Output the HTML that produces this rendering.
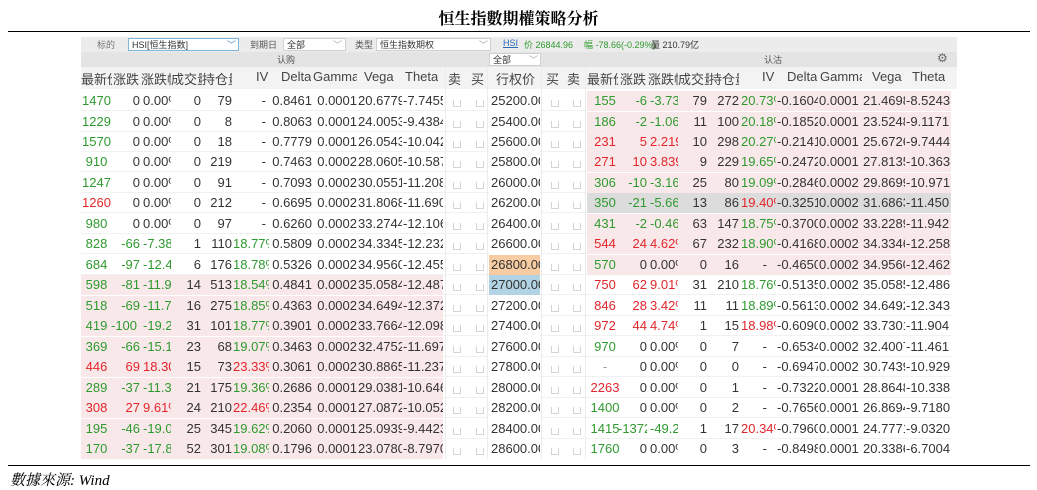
<!DOCTYPE html>
<html><head><meta charset="utf-8"><style>
*{margin:0;padding:0;box-sizing:border-box}
body{width:1037px;height:490px;background:#fff;position:relative;overflow:hidden;font-family:"Liberation Sans","Noto Sans CJK SC",sans-serif;color:#333}
.title{position:absolute;left:0;width:1037px;top:6px;text-align:center;font:bold 16px "Liberation Serif","Noto Serif CJK SC",serif;color:#000}
.ln{position:absolute;left:8px;width:1022px;height:1px;background:#000}
.src{position:absolute;left:10px;top:469px;font:italic 15px "Liberation Serif","Noto Serif CJK SC",serif;color:#000}
.tb{position:absolute;left:81px;top:37px;width:876px;height:15px;background:#ececec;font-size:9px;color:#555}
.tb span{position:absolute;top:1px;white-space:nowrap}
.sel{position:absolute;top:1px;height:13px;background:#fff;border:1px solid #d0d0d0}
.sh{position:absolute;left:81px;top:52px;width:876px;height:15px;background:#e4e4e4;font-size:9px;color:#555}
.hd{position:absolute;left:81px;top:67px;width:876px;height:22px;background:#f3f3f3}
.h{position:absolute;top:69px;font-size:13px;white-space:nowrap;overflow:hidden;color:#444}
.r{position:absolute;left:0;width:1037px;height:20px;font-size:13px;line-height:20px}
.r span{position:absolute;top:0;height:20px;white-space:nowrap;overflow:hidden;text-align:right}
.pl{position:absolute;left:81px;width:362px;top:0;height:20px;background:#f9e8e9}
.pr{position:absolute;left:587px;width:364px;top:0;height:20px;background:#f9e8e9}
.gr{background:#dcdcdc}
.sep{position:absolute;left:81px;width:870px;bottom:0;height:1px;background:#f1f1f1}
.cb{position:absolute;top:9px;width:8px;height:7px;border:1px solid #d4d4d4;border-top:none}
.r span.a,.r span.A{text-align:center}
.a{left:81px;width:31px}.b{left:111px;width:29px}.c{left:140px;width:31px;padding-left:3px}.d{left:171px;width:30px}.e{left:201px;width:31px}.f{left:232px;width:37px;padding-left:1px}.g{left:270px;width:42px}.hh{left:312px;width:45px}.i{left:357px;width:45px;padding-left:1px}.j{left:402px;width:41px;padding-left:1px}
.k{left:489px;width:51px;padding-left:2px;background:#fff}
.A{left:587px;width:36px}.B{left:618px;width:29px}.C{left:647px;width:31px;padding-left:3px}.D{left:678px;width:29px}.E{left:707px;width:32px}.F{left:739px;width:37px;padding-left:2px}.G{left:776px;width:42px;padding-left:1px}.H{left:818px;width:43px;padding-left:1px}.I{left:861px;width:44px;padding-left:2px}.J{left:905px;width:46px;padding-left:1px}
.r span.c,.r span.f,.r span.i,.r span.j,.r span.k,.r span.C,.r span.F,.r span.G,.r span.H,.r span.I,.r span.J,.r span.L{text-align:left}
.r span.f.dsh{text-align:right;padding-right:3px}
.r span.F.dsh{text-align:right;padding-right:9px}
.gn{color:#2e9a2e}.rd{color:#e2262c}
.r span.or{background:#f8cca2}.r span.bl{background:#b2d3e3}
.vl{position:absolute;top:67px;width:1px;height:392px;background:#ececec}
</style></head><body>
<div class="title">恒生指數期權策略分析</div>
<div class="ln" style="top:31px"></div>
<div class="tb">
<span style="left:16px;color:#777">标的</span>
<div class="sel" style="left:47px;width:111px;border-color:#7fb6dc"></div><span style="left:51px;color:#333">HSI[恒生指数]</span><span style="left:146px;color:#4a90c9">﹀</span>
<span style="left:169px">到期日</span>
<div class="sel" style="left:202px;width:63px"></div><span style="left:206px;color:#333">全部</span><span style="left:252px;color:#aaa">﹀</span>
<span style="left:274px">类型</span>
<div class="sel" style="left:295px;width:115px"></div><span style="left:299px;color:#333">恒生指数期权</span><span style="left:398px;color:#aaa">﹀</span>
<span style="left:422px;color:#2a6bb5;text-decoration:underline">HSI</span>
<span style="left:443px;color:#2e9a2e">价 26844.96</span>
<span style="left:503px;color:#2e9a2e">幅 -78.66(-0.29%)</span>
<span style="left:570px;color:#333">量 210.79亿</span>
</div>
<div class="sh">
<span style="position:absolute;left:196px;top:1px">认购</span>
<div class="sel" style="left:408px;width:52px"></div><span style="position:absolute;left:412px;top:1px;color:#333">全部</span><span style="position:absolute;left:448px;top:1px;color:#aaa">﹀</span>
<span style="position:absolute;left:683px;top:1px">认沽</span>
<span style="position:absolute;left:856px;top:-1px;font-size:12px;color:#666">⚙</span>
</div>
<div class="hd"></div>
<div class="h" style="left:81px;width:31px">最新价</div><div class="h" style="left:113px;width:27px">涨跌</div><div class="h" style="left:141px;width:30px">涨跌幅</div><div class="h" style="left:171px;width:31px">成交量</div><div class="h" style="left:202px;width:30px">持仓量</div><div class="h" style="left:256px">IV</div><div class="h" style="left:281px">Delta</div><div class="h" style="left:313px;width:44px">Gamma</div><div class="h" style="left:364px">Vega</div><div class="h" style="left:405px">Theta</div>
<div class="h" style="left:448px">卖</div><div class="h" style="left:471px">买</div><div class="h" style="left:496px">行权价</div><div class="h" style="left:546px">买</div><div class="h" style="left:567px">卖</div>
<div class="h" style="left:587px;width:31px">最新价</div><div class="h" style="left:620px;width:27px">涨跌</div><div class="h" style="left:648px;width:30px">涨跌幅</div><div class="h" style="left:678px;width:31px">成交量</div><div class="h" style="left:709px;width:30px">持仓量</div><div class="h" style="left:762px">IV</div><div class="h" style="left:787px">Delta</div><div class="h" style="left:820px;width:42px">Gamma</div><div class="h" style="left:872px">Vega</div><div class="h" style="left:912px">Theta</div>

<div class="r" style="top:91px"><div class="sep"></div><div class="pr"></div><span class="a gn">1470</span><span class="b">0</span><span class="c">0.00%</span><span class="d">0</span><span class="e">79</span><span class="f dsh">-</span><span class="g">0.8461</span><span class="hh">0.0001</span><span class="i">20.6779</span><span class="j">-7.7455</span><span class="k">25200.00</span><span class="A gn">155</span><span class="B gn">-6</span><span class="C gn">-3.73</span><span class="D">79</span><span class="E">272</span><span class="F gn">20.73%</span><span class="G">-0.1604</span><span class="H">0.0001</span><span class="I">21.4698</span><span class="J">-8.5243</span></div>
<div class="r" style="top:111.5px"><div class="sep"></div><div class="pr"></div><span class="a gn">1229</span><span class="b">0</span><span class="c">0.00%</span><span class="d">0</span><span class="e">8</span><span class="f dsh">-</span><span class="g">0.8063</span><span class="hh">0.0001</span><span class="i">24.0053</span><span class="j">-9.4384</span><span class="k">25400.00</span><span class="A gn">186</span><span class="B gn">-2</span><span class="C gn">-1.06</span><span class="D">11</span><span class="E">100</span><span class="F gn">20.18%</span><span class="G">-0.1852</span><span class="H">0.0001</span><span class="I">23.5248</span><span class="J">-9.1171</span></div>
<div class="r" style="top:132px"><div class="sep"></div><div class="pr"></div><span class="a gn">1570</span><span class="b">0</span><span class="c">0.00%</span><span class="d">0</span><span class="e">18</span><span class="f dsh">-</span><span class="g">0.7779</span><span class="hh">0.0001</span><span class="i">26.0543</span><span class="j">-10.042</span><span class="k">25600.00</span><span class="A rd">231</span><span class="B rd">5</span><span class="C rd">2.219</span><span class="D">10</span><span class="E">298</span><span class="F gn">20.27%</span><span class="G">-0.2141</span><span class="H">0.0001</span><span class="I">25.6726</span><span class="J">-9.7444</span></div>
<div class="r" style="top:152.4px"><div class="sep"></div><div class="pr"></div><span class="a gn">910</span><span class="b">0</span><span class="c">0.00%</span><span class="d">0</span><span class="e">219</span><span class="f dsh">-</span><span class="g">0.7463</span><span class="hh">0.0002</span><span class="i">28.0605</span><span class="j">-10.587</span><span class="k">25800.00</span><span class="A rd">271</span><span class="B rd">10</span><span class="C rd">3.839</span><span class="D">9</span><span class="E">229</span><span class="F gn">19.65%</span><span class="G">-0.2472</span><span class="H">0.0001</span><span class="I">27.8135</span><span class="J">-10.363</span></div>
<div class="r" style="top:172.9px"><div class="sep"></div><div class="pr"></div><span class="a gn">1247</span><span class="b">0</span><span class="c">0.00%</span><span class="d">0</span><span class="e">91</span><span class="f dsh">-</span><span class="g">0.7093</span><span class="hh">0.0002</span><span class="i">30.0551</span><span class="j">-11.208</span><span class="k">26000.00</span><span class="A gn">306</span><span class="B gn">-10</span><span class="C gn">-3.16</span><span class="D">25</span><span class="E">80</span><span class="F gn">19.09%</span><span class="G">-0.2846</span><span class="H">0.0002</span><span class="I">29.8699</span><span class="J">-10.971</span></div>
<div class="r" style="top:193.4px"><div class="sep"></div><div class="pr gr"></div><span class="a rd">1260</span><span class="b">0</span><span class="c">0.00%</span><span class="d">0</span><span class="e">212</span><span class="f dsh">-</span><span class="g">0.6695</span><span class="hh">0.0002</span><span class="i">31.8068</span><span class="j">-11.690</span><span class="k">26200.00</span><span class="A gn">350</span><span class="B gn">-21</span><span class="C gn">-5.66</span><span class="D">13</span><span class="E">86</span><span class="F rd">19.40%</span><span class="G">-0.3251</span><span class="H">0.0002</span><span class="I">31.6863</span><span class="J">-11.450</span></div>
<div class="r" style="top:213.8px"><div class="sep"></div><div class="pr"></div><span class="a gn">980</span><span class="b">0</span><span class="c">0.00%</span><span class="d">0</span><span class="e">97</span><span class="f dsh">-</span><span class="g">0.6260</span><span class="hh">0.0002</span><span class="i">33.2744</span><span class="j">-12.106</span><span class="k">26400.00</span><span class="A gn">431</span><span class="B gn">-2</span><span class="C gn">-0.46</span><span class="D">63</span><span class="E">147</span><span class="F gn">18.75%</span><span class="G">-0.3700</span><span class="H">0.0002</span><span class="I">33.2289</span><span class="J">-11.942</span></div>
<div class="r" style="top:234.3px"><div class="sep"></div><div class="pr"></div><span class="a gn">828</span><span class="b gn">-66</span><span class="c gn">-7.38</span><span class="d">1</span><span class="e">110</span><span class="f gn">18.77%</span><span class="g">0.5809</span><span class="hh">0.0002</span><span class="i">34.3345</span><span class="j">-12.232</span><span class="k">26600.00</span><span class="A rd">544</span><span class="B rd">24</span><span class="C rd">4.62%</span><span class="D">67</span><span class="E">232</span><span class="F gn">18.90%</span><span class="G">-0.4168</span><span class="H">0.0002</span><span class="I">34.3346</span><span class="J">-12.258</span></div>
<div class="r" style="top:254.8px"><div class="sep"></div><div class="pr"></div><span class="a gn">684</span><span class="b gn">-97</span><span class="c gn">-12.4</span><span class="d">6</span><span class="e">176</span><span class="f gn">18.78%</span><span class="g">0.5326</span><span class="hh">0.0002</span><span class="i">34.9560</span><span class="j">-12.455</span><span class="k or">26800.00</span><span class="A gn">570</span><span class="B">0</span><span class="C">0.00%</span><span class="D">0</span><span class="E">16</span><span class="F dsh">-</span><span class="G">-0.4650</span><span class="H">0.0002</span><span class="I">34.9560</span><span class="J">-12.462</span></div>
<div class="r" style="top:275.2px"><div class="sep"></div><div class="pl"></div><span class="a gn">598</span><span class="b gn">-81</span><span class="c gn">-11.9</span><span class="d">14</span><span class="e">513</span><span class="f gn">18.54%</span><span class="g">0.4841</span><span class="hh">0.0002</span><span class="i">35.0584</span><span class="j">-12.487</span><span class="k bl">27000.00</span><span class="A rd">750</span><span class="B rd">62</span><span class="C rd">9.01%</span><span class="D">31</span><span class="E">210</span><span class="F gn">18.76%</span><span class="G">-0.5135</span><span class="H">0.0002</span><span class="I">35.0585</span><span class="J">-12.486</span></div>
<div class="r" style="top:295.7px"><div class="sep"></div><div class="pl"></div><span class="a gn">518</span><span class="b gn">-69</span><span class="c gn">-11.7</span><span class="d">16</span><span class="e">275</span><span class="f gn">18.85%</span><span class="g">0.4363</span><span class="hh">0.0002</span><span class="i">34.6494</span><span class="j">-12.372</span><span class="k">27200.00</span><span class="A rd">846</span><span class="B rd">28</span><span class="C rd">3.42%</span><span class="D">11</span><span class="E">11</span><span class="F gn">18.89%</span><span class="G">-0.5613</span><span class="H">0.0002</span><span class="I">34.6492</span><span class="J">-12.343</span></div>
<div class="r" style="top:316.2px"><div class="sep"></div><div class="pl"></div><span class="a gn">419</span><span class="b gn L">-100</span><span class="c gn">-19.2</span><span class="d">31</span><span class="e">101</span><span class="f gn">18.77%</span><span class="g">0.3901</span><span class="hh">0.0002</span><span class="i">33.7664</span><span class="j">-12.098</span><span class="k">27400.00</span><span class="A rd">972</span><span class="B rd">44</span><span class="C rd">4.74%</span><span class="D">1</span><span class="E">15</span><span class="F rd">18.98%</span><span class="G">-0.6090</span><span class="H">0.0002</span><span class="I">33.7301</span><span class="J">-11.904</span></div>
<div class="r" style="top:336.6px"><div class="sep"></div><div class="pl"></div><span class="a gn">369</span><span class="b gn">-66</span><span class="c gn">-15.1</span><span class="d">23</span><span class="e">68</span><span class="f gn">19.07%</span><span class="g">0.3463</span><span class="hh">0.0002</span><span class="i">32.4752</span><span class="j">-11.697</span><span class="k">27600.00</span><span class="A gn">970</span><span class="B">0</span><span class="C">0.00%</span><span class="D">0</span><span class="E">7</span><span class="F dsh">-</span><span class="G">-0.6534</span><span class="H">0.0002</span><span class="I">32.4007</span><span class="J">-11.461</span></div>
<div class="r" style="top:357.1px"><div class="sep"></div><div class="pl"></div><span class="a rd">446</span><span class="b rd">69</span><span class="c rd">18.30</span><span class="d">15</span><span class="e">73</span><span class="f rd">23.33%</span><span class="g">0.3061</span><span class="hh">0.0002</span><span class="i">30.8865</span><span class="j">-11.237</span><span class="k">27800.00</span><span class="A" style="color:#999">-</span><span class="B">0</span><span class="C">0.00%</span><span class="D">0</span><span class="E">0</span><span class="F dsh">-</span><span class="G">-0.6947</span><span class="H">0.0002</span><span class="I">30.7439</span><span class="J">-10.929</span></div>
<div class="r" style="top:377.6px"><div class="sep"></div><div class="pl"></div><span class="a gn">289</span><span class="b gn">-37</span><span class="c gn">-11.3</span><span class="d">21</span><span class="e">175</span><span class="f gn">19.36%</span><span class="g">0.2686</span><span class="hh">0.0001</span><span class="i">29.0381</span><span class="j">-10.646</span><span class="k">28000.00</span><span class="A rd">2263</span><span class="B">0</span><span class="C">0.00%</span><span class="D">0</span><span class="E">1</span><span class="F dsh">-</span><span class="G">-0.7322</span><span class="H">0.0001</span><span class="I">28.8648</span><span class="J">-10.338</span></div>
<div class="r" style="top:398px"><div class="sep"></div><div class="pl"></div><span class="a rd">308</span><span class="b rd">27</span><span class="c rd">9.61%</span><span class="d">24</span><span class="e">210</span><span class="f rd">22.46%</span><span class="g">0.2354</span><span class="hh">0.0001</span><span class="i">27.0872</span><span class="j">-10.052</span><span class="k">28200.00</span><span class="A gn">1400</span><span class="B">0</span><span class="C">0.00%</span><span class="D">0</span><span class="E">2</span><span class="F dsh">-</span><span class="G">-0.7656</span><span class="H">0.0001</span><span class="I">26.8694</span><span class="J">-9.7180</span></div>
<div class="r" style="top:418.5px"><div class="sep"></div><div class="pl"></div><span class="a gn">195</span><span class="b gn">-46</span><span class="c gn">-19.0</span><span class="d">25</span><span class="e">345</span><span class="f gn">19.62%</span><span class="g">0.2060</span><span class="hh">0.0001</span><span class="i">25.0939</span><span class="j">-9.4423</span><span class="k">28400.00</span><span class="A gn">1415</span><span class="B gn L">-1372</span><span class="C gn">-49.2</span><span class="D">1</span><span class="E">17</span><span class="F rd">20.34%</span><span class="G">-0.7960</span><span class="H">0.0001</span><span class="I">24.7771</span><span class="J">-9.0320</span></div>
<div class="r" style="top:439px"><div class="pl"></div><span class="a gn">170</span><span class="b gn">-37</span><span class="c gn">-17.8</span><span class="d">52</span><span class="e">301</span><span class="f gn">19.08%</span><span class="g">0.1796</span><span class="hh">0.0001</span><span class="i">23.0780</span><span class="j">-8.7970</span><span class="k">28600.00</span><span class="A gn">1760</span><span class="B">0</span><span class="C">0.00%</span><span class="D">0</span><span class="E">3</span><span class="F dsh">-</span><span class="G">-0.8498</span><span class="H">0.0001</span><span class="I">20.3386</span><span class="J">-6.7004</span></div>

<div class="vl" style="left:445px"></div><div class="vl" style="left:487px"></div><div class="vl" style="left:541px"></div><div class="vl" style="left:585px"></div>

<div style="position:absolute;left:0;top:0">
<div class="cb" style="left:453px;top:100px"></div><div class="cb" style="left:476px;top:100px"></div><div class="cb" style="left:551px;top:100px"></div><div class="cb" style="left:573px;top:100px"></div>
<div class="cb" style="left:453px;top:120.5px"></div><div class="cb" style="left:476px;top:120.5px"></div><div class="cb" style="left:551px;top:120.5px"></div><div class="cb" style="left:573px;top:120.5px"></div>
<div class="cb" style="left:453px;top:141px"></div><div class="cb" style="left:476px;top:141px"></div><div class="cb" style="left:551px;top:141px"></div><div class="cb" style="left:573px;top:141px"></div>
<div class="cb" style="left:453px;top:161.4px"></div><div class="cb" style="left:476px;top:161.4px"></div><div class="cb" style="left:551px;top:161.4px"></div><div class="cb" style="left:573px;top:161.4px"></div>
<div class="cb" style="left:453px;top:181.9px"></div><div class="cb" style="left:476px;top:181.9px"></div><div class="cb" style="left:551px;top:181.9px"></div><div class="cb" style="left:573px;top:181.9px"></div>
<div class="cb" style="left:453px;top:202.4px"></div><div class="cb" style="left:476px;top:202.4px"></div><div class="cb" style="left:551px;top:202.4px"></div><div class="cb" style="left:573px;top:202.4px"></div>
<div class="cb" style="left:453px;top:222.8px"></div><div class="cb" style="left:476px;top:222.8px"></div><div class="cb" style="left:551px;top:222.8px"></div><div class="cb" style="left:573px;top:222.8px"></div>
<div class="cb" style="left:453px;top:243.3px"></div><div class="cb" style="left:476px;top:243.3px"></div><div class="cb" style="left:551px;top:243.3px"></div><div class="cb" style="left:573px;top:243.3px"></div>
<div class="cb" style="left:453px;top:263.8px"></div><div class="cb" style="left:476px;top:263.8px"></div><div class="cb" style="left:551px;top:263.8px"></div><div class="cb" style="left:573px;top:263.8px"></div>
<div class="cb" style="left:453px;top:284.2px"></div><div class="cb" style="left:476px;top:284.2px"></div><div class="cb" style="left:551px;top:284.2px"></div><div class="cb" style="left:573px;top:284.2px"></div>
<div class="cb" style="left:453px;top:304.7px"></div><div class="cb" style="left:476px;top:304.7px"></div><div class="cb" style="left:551px;top:304.7px"></div><div class="cb" style="left:573px;top:304.7px"></div>
<div class="cb" style="left:453px;top:325.2px"></div><div class="cb" style="left:476px;top:325.2px"></div><div class="cb" style="left:551px;top:325.2px"></div><div class="cb" style="left:573px;top:325.2px"></div>
<div class="cb" style="left:453px;top:345.6px"></div><div class="cb" style="left:476px;top:345.6px"></div><div class="cb" style="left:551px;top:345.6px"></div><div class="cb" style="left:573px;top:345.6px"></div>
<div class="cb" style="left:453px;top:366.1px"></div><div class="cb" style="left:476px;top:366.1px"></div><div class="cb" style="left:551px;top:366.1px"></div><div class="cb" style="left:573px;top:366.1px"></div>
<div class="cb" style="left:453px;top:386.6px"></div><div class="cb" style="left:476px;top:386.6px"></div><div class="cb" style="left:551px;top:386.6px"></div><div class="cb" style="left:573px;top:386.6px"></div>
<div class="cb" style="left:453px;top:407px"></div><div class="cb" style="left:476px;top:407px"></div><div class="cb" style="left:551px;top:407px"></div><div class="cb" style="left:573px;top:407px"></div>
<div class="cb" style="left:453px;top:427.5px"></div><div class="cb" style="left:476px;top:427.5px"></div><div class="cb" style="left:551px;top:427.5px"></div><div class="cb" style="left:573px;top:427.5px"></div>
<div class="cb" style="left:453px;top:448px"></div><div class="cb" style="left:476px;top:448px"></div><div class="cb" style="left:551px;top:448px"></div><div class="cb" style="left:573px;top:448px"></div>
</div>

<div class="ln" style="top:465px"></div>
<div class="src">數據來源: Wind</div>
</body></html>
